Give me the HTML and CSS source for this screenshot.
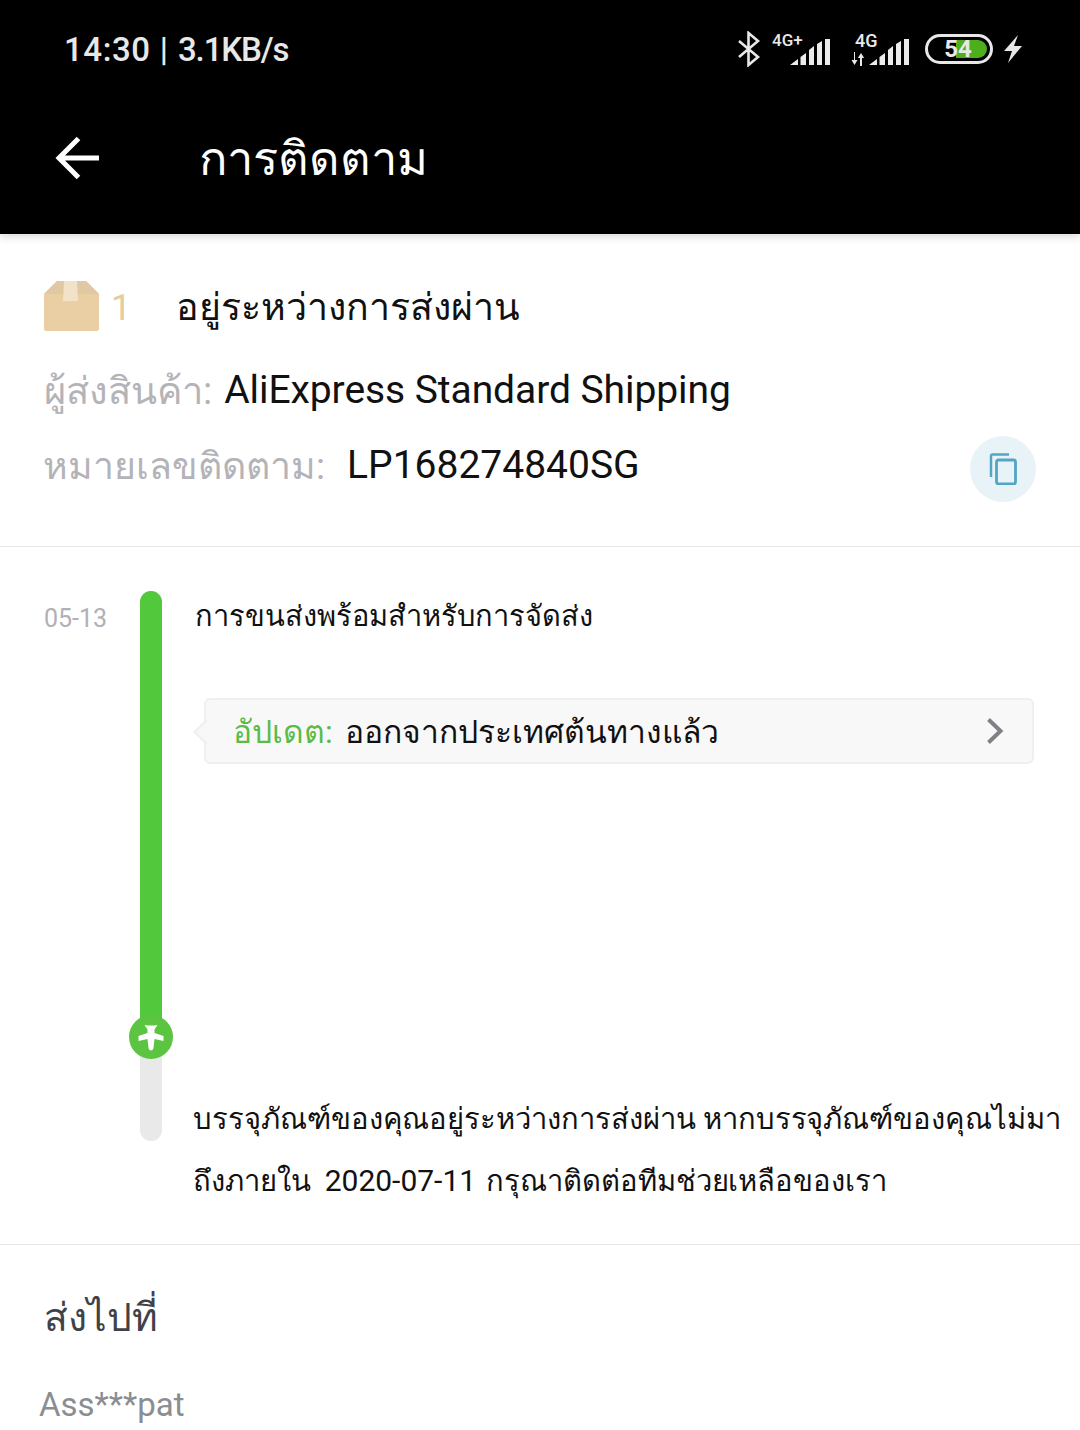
FILE: index.html
```html
<!DOCTYPE html>
<html lang="th">
<head>
<meta charset="utf-8">
<title>การติดตาม</title>
<link rel="stylesheet" href="styles.css">
</head>
<body>
<div class="page">
  <header class="header">
    <div class="status">
      <div class="clock"><span class="clock-time">14:30</span><span class="clock-sep">|</span><span class="clock-rate">3.1KB/s</span></div>
      <div class="status-icons">
        <svg class="ic-bt" width="24" height="36" viewBox="0 0 24 36"><path d="M2 10 L21 26 L11.500 34 V2 L21 10 L2 26" fill="none" stroke="#e8e8e8" stroke-width="2.600"/></svg>
        <div class="net net-a">
          <span class="net-label">4G+</span>
          <svg width="42" height="30" viewBox="0 0 42 30"><path d="M0 28 L8 22 V28 Z M10.500 28 V20 L16 16 V28 Z M19 28 V13 L24 9 V28 Z M27 28 V7 L32 4 V28 Z M35 28 V2 H40 V28 Z" fill="#ececec"/></svg>
        </div>
        <div class="net net-b">
          <span class="net-label">4G</span>
          <svg class="updown" width="14" height="14" viewBox="0 0 14 14"><path d="M4 0 V8 H6.500 L3.500 13 L0.500 8 H3 V0 Z M9 14 V6 H6.800 L10 1 L13.200 6 H11 V14 Z" fill="#e8e8e8"/></svg>
          <svg width="42" height="30" viewBox="0 0 42 30"><path d="M0 28 L8 22 V28 Z M10.500 28 V20 L16 16 V28 Z M19 28 V13 L24 9 V28 Z M27 28 V7 L32 4 V28 Z M35 28 V2 H40 V28 Z" fill="#ececec"/></svg>
        </div>
        <div class="battery"><span class="battery-fill"></span><span class="battery-num">54</span></div>
        <svg width="20" height="30" viewBox="0 0 20 30"><path d="M15 1 L1 17 H9 L5 29 L19 12 H11 Z" fill="#e8e8e8"/></svg>
      </div>
    </div>
    <div class="toolbar">
      <svg class="back" width="48" height="48" viewBox="0 0 48 48"><path d="M46 24 H6 M25.500 4.500 L6 24 L25.500 43.500" fill="none" stroke="#fff" stroke-width="5"/></svg>
      <h1 class="title">การติดตาม</h1>
    </div>
  </header>

  <section class="summary">
    <div class="pkg-row">
      <svg class="pkg" width="56" height="52" viewBox="0 0 56 52"><path d="M0 14 L13 1 H42 L55 14 V49 Q55 51 53 51 H2 Q0 51 0 49 Z" fill="#ebcfa4"/><path d="M0 14 L13 1 H42 L55 14 Z" fill="#e0c8a2"/><path d="M20 1 H33 L34 21 H19 Z" fill="#f1e2c8"/></svg>
      <span class="pkg-num">1</span>
      <span class="pkg-status">อยู่ระหว่างการส่งผ่าน</span>
    </div>
    <div class="info-row carrier">
      <span class="info-label">ผู้ส่งสินค้า:</span>
      <span class="info-value">AliExpress Standard Shipping</span>
    </div>
    <div class="info-row tracking">
      <span class="info-label">หมายเลขติดตาม:</span>
      <span class="info-value">LP168274840SG</span>
      <span class="copy"><svg width="28" height="32" viewBox="0 0 28 32"><path d="M2 24 V3 Q2 1.500 3.500 1.500 H20" fill="none" stroke="#54a5c4" stroke-width="2.500"/><rect x="7.500" y="7" width="19" height="24" rx="2" fill="none" stroke="#54a5c4" stroke-width="2.800"/></svg></span>
    </div>
  </section>

  <section class="timeline">
    <div class="date">05-13</div>
    <div class="track">
      <div class="track-done"></div>
      <div class="track-dot"><svg width="32" height="32" viewBox="0 0 32 32"><path d="M9.500 4 L13 4.500 H19 L22.500 4 L19.500 8.500 V12 L28.500 15 V20 L19.500 18 L18.500 27 Q18 29.500 16 29.500 Q14 29.500 13.500 27 L12.500 18 L3.500 20 V15 L12.500 12 V8.500 Z" fill="#fff"/></svg></div>
    </div>
    <div class="events">
      <div class="event-title">การขนส่งพร้อมสำหรับการจัดส่ง</div>
      <div class="update">
        <span class="update-label">อัปเดต:</span>
        <span class="update-text">ออกจากประเทศต้นทางแล้ว</span>
        <svg class="chev" width="18" height="28" viewBox="0 0 18 28"><path d="M2.500 2.500 L14.500 14 L2.500 25.500" fill="none" stroke="#808086" stroke-width="4"/></svg>
      </div>
      <div class="notice">
        <div class="notice-line">บรรจุภัณฑ์ของคุณอยู่ระหว่างการส่งผ่าน หากบรรจุภัณฑ์ของคุณไม่มา</div>
        <div class="notice-line notice-split">
          <span>ถึงภายใน</span>
          <span class="notice-date">2020-07-11</span>
          <span>กรุณาติดต่อทีมช่วยเหลือของเรา</span>
        </div>
      </div>
    </div>
  </section>

  <section class="ship">
    <h2 class="ship-title">ส่งไปที่</h2>
    <div class="ship-name">Ass***pat</div>
  </section>
</div>
</body>
</html>
```

FILE: styles.css
```css
* { box-sizing: border-box; }
html, body { margin: 0; padding: 0; background: #fff; }
body { font-family: Roboto, sans-serif; color: #000; }
.page { width: 1080px; height: 1430px; overflow: hidden; }
.header { background: #000; height: 234px; color: #fff; box-shadow: 0 3px 8px rgba(0,0,0,.15); position: relative; }
.status { height: 98px; padding: 0 57px 0 64px; display: flex; justify-content: space-between; align-items: center; }
.clock { display: flex; align-items: center; font-size: 33px; font-weight: 500; color: #e8e8e8; }
.clock-time { letter-spacing: .6px; }
.clock-sep { margin: 0 10px 0 9px; }
.clock-rate { letter-spacing: -1.100px; }
.status-icons { display: flex; align-items: center; }
.ic-bt { margin-right: 11px; }
.net { position: relative; width: 60px; height: 36px; display: flex; justify-content: flex-end; align-items: flex-end; }
.net-a { margin-right: 19px; }
.net-b { margin-right: 14px; }
.net-label { position: absolute; top: -1px; left: 0; font-size: 17px; font-weight: 500; color: #e8e8e8; }
.net-b .net-label { left: 4px; font-size: 18px; }
.updown { position: absolute; left: 0; bottom: 1px; }
.battery { position: relative; width: 68px; height: 30px; border: 3px solid #e8e8e8; border-radius: 15px; margin-right: 10px; overflow: hidden; }
.battery-fill { position: absolute; left: 28px; top: 3px; bottom: 3px; right: 3px; background: #4caf1c; border-radius: 0 10px 10px 0; }
.battery-num { position: relative; display: block; text-align: center; font-size: 24px; line-height: 24px; font-weight: 700; color: #e8e8e8; margin-left: -2px; }
.toolbar { height: 136px; display: flex; align-items: center; padding: 0 0 16px 53px; }
.back { flex: none; }
.title { margin: 0 0 0 98px; font-size: 47px; font-weight: 400; color: #fff; }
.summary { height: 313px; border-bottom: 1px solid #e6e6e6; padding: 46px 44px 0; }
.pkg-row { display: flex; align-items: center; height: 52px; }
.pkg { flex: none; }
.pkg-num { font-size: 36px; color: #e5cc9c; margin-left: 11px; width: 65px; position: relative; top: 2px; }
.pkg-status { font-size: 37.500px; color: #111; position: relative; top: 1px; }
.info-row { display: flex; align-items: center; font-size: 39px; }
.carrier { margin-top: 33px; height: 50px; }
.carrier .info-value { letter-spacing: -.07px; }
.tracking { margin-top: 25px; height: 50px; position: relative; }
.info-label { color: #b3b3b8; font-size: 38px; }
.tracking .info-label { font-size: 37.400px; margin-left: -1px; }
.info-value { color: #111; margin-left: 12px; }
.tracking .info-value { margin-left: 22px; }
.copy { position: absolute; right: 0; top: -4px; width: 66px; height: 66px; border-radius: 50%; background: #e8f3f8; display: flex; align-items: center; justify-content: center; }
.timeline { height: 698px; border-bottom: 1px solid #e6e6e6; display: flex; padding: 44px 0 0 44px; position: relative; }
.date { width: 96px; flex: none; font-size: 25px; color: #b0b0b5; padding-top: 13px; }
.track { width: 22px; height: 550px; flex: none; background: #e9e9e9; border-radius: 11px; position: relative; }
.track-done { height: 445px; background: #52c83d; border-radius: 11px 11px 0 0; }
.track-dot { position: absolute; left: -11px; top: 424px; width: 44px; height: 44px; border-radius: 50%; background: #5bc440; display: flex; align-items: center; justify-content: center; }
.events { flex: 1; min-width: 0; padding-left: 31px; }
.event-title { font-size: 29px; color: #111; line-height: 50px; margin-left: 2px; }
.update { position: relative; display: flex; align-items: center; width: 830px; height: 66px; margin: 57px 0 0 11px; padding: 0 28px 0 27px; background: #f8f8f8; border: 2px solid #efefef; border-radius: 6px; font-size: 31.800px; }
.update::before { content: ""; position: absolute; left: -9px; top: 23px; width: 16px; height: 16px; background: #f8f8f8; border-left: 2px solid #efefef; border-bottom: 2px solid #efefef; transform: rotate(45deg); }
.update-label { color: #5abb48; }
.update-text { color: #111; margin-left: 12px; }
.chev { margin-left: auto; }
.notice { margin: 324px 0 0; font-size: 29.200px; letter-spacing: -.05px; line-height: 62px; color: #111; white-space: nowrap; }
.notice-split { display: flex; align-items: baseline; gap: 14px; }
.notice-date { font-size: 30px; margin-right: -4px; letter-spacing: 0; }
.ship { padding: 43px 39px 0; }
.ship-title { margin: 0 0 0 5px; font-size: 39px; line-height: 60px; font-weight: 400; color: #3f4249; }
.ship-name { margin-top: 37px; font-size: 33px; color: #8a8d92; }
```
